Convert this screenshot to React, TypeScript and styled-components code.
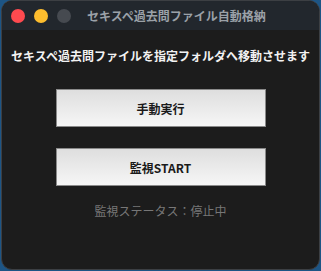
import React from "react";
import styled, { createGlobalStyle } from "styled-components";

const GlobalStyle = createGlobalStyle`
  html, body {
    margin: 0;
    padding: 0;
    width: 321px;
    height: 271px;
    overflow: hidden;
    background: #1d5585;
    font-family: "Noto Sans CJK JP", "Noto Sans", sans-serif;
  }
`;

const Window = styled.div`
  box-sizing: border-box;
  width: 319px;
  height: 270px;
  margin-left: 1px;
  border-radius: 11px;
  border: 1px solid #3c3f43;
  overflow: hidden;
  background: #1c1c1c;
  display: flex;
  flex-direction: column;
`;

const TitleBar = styled.div`
  height: 29px;
  flex-shrink: 0;
  background: #22272d;
  display: flex;
  align-items: center;
  padding-left: 9px;
  gap: 9px;
`;

const Light = styled.span<{ $color: string }>`
  width: 14px;
  height: 14px;
  border-radius: 50%;
  background: ${(p) => p.$color};
`;

const Title = styled.div`
  margin-left: 7px;
  color: #9ba1a8;
  font-size: 12px;
  font-weight: 700;
  line-height: 16px;
`;

const Body = styled.div`
  display: flex;
  flex-direction: column;
  align-items: center;
`;

const Lead = styled.div`
  margin-top: 18px;
  color: #f2f2f2;
  font-size: 12px;
  font-weight: 700;
  line-height: 16px;
  white-space: nowrap;
`;

const ActionButton = styled.button<{ $top: number }>`
  box-sizing: border-box;
  margin-top: ${(p) => p.$top}px;
  width: 210px;
  height: 38px;
  border: 1px solid #8a8a8a;
  border-radius: 0;
  background: linear-gradient(#dedede, #f6f6f6);
  color: #1a1a1a;
  font-family: inherit;
  font-size: 12px;
  font-weight: 700;
  padding: 0;
`;

const Status = styled.div`
  margin-top: 17px;
  color: #777777;
  font-size: 12px;
  line-height: 16px;
`;

export default function App() {
  return (
    <>
      <GlobalStyle />
      <Window>
        <TitleBar>
          <Light $color="#fe4a4f" />
          <Light $color="#fdbd2e" />
          <Light $color="#464a50" />
          <Title>セキスペ過去問ファイル自動格納</Title>
        </TitleBar>
        <Body>
          <Lead>セキスペ過去問ファイルを指定フォルダへ移動させます</Lead>
          <ActionButton $top={25}>手動実行</ActionButton>
          <ActionButton $top={21}>監視START</ActionButton>
          <Status>監視ステータス：停止中</Status>
        </Body>
      </Window>
    </>
  );
}
